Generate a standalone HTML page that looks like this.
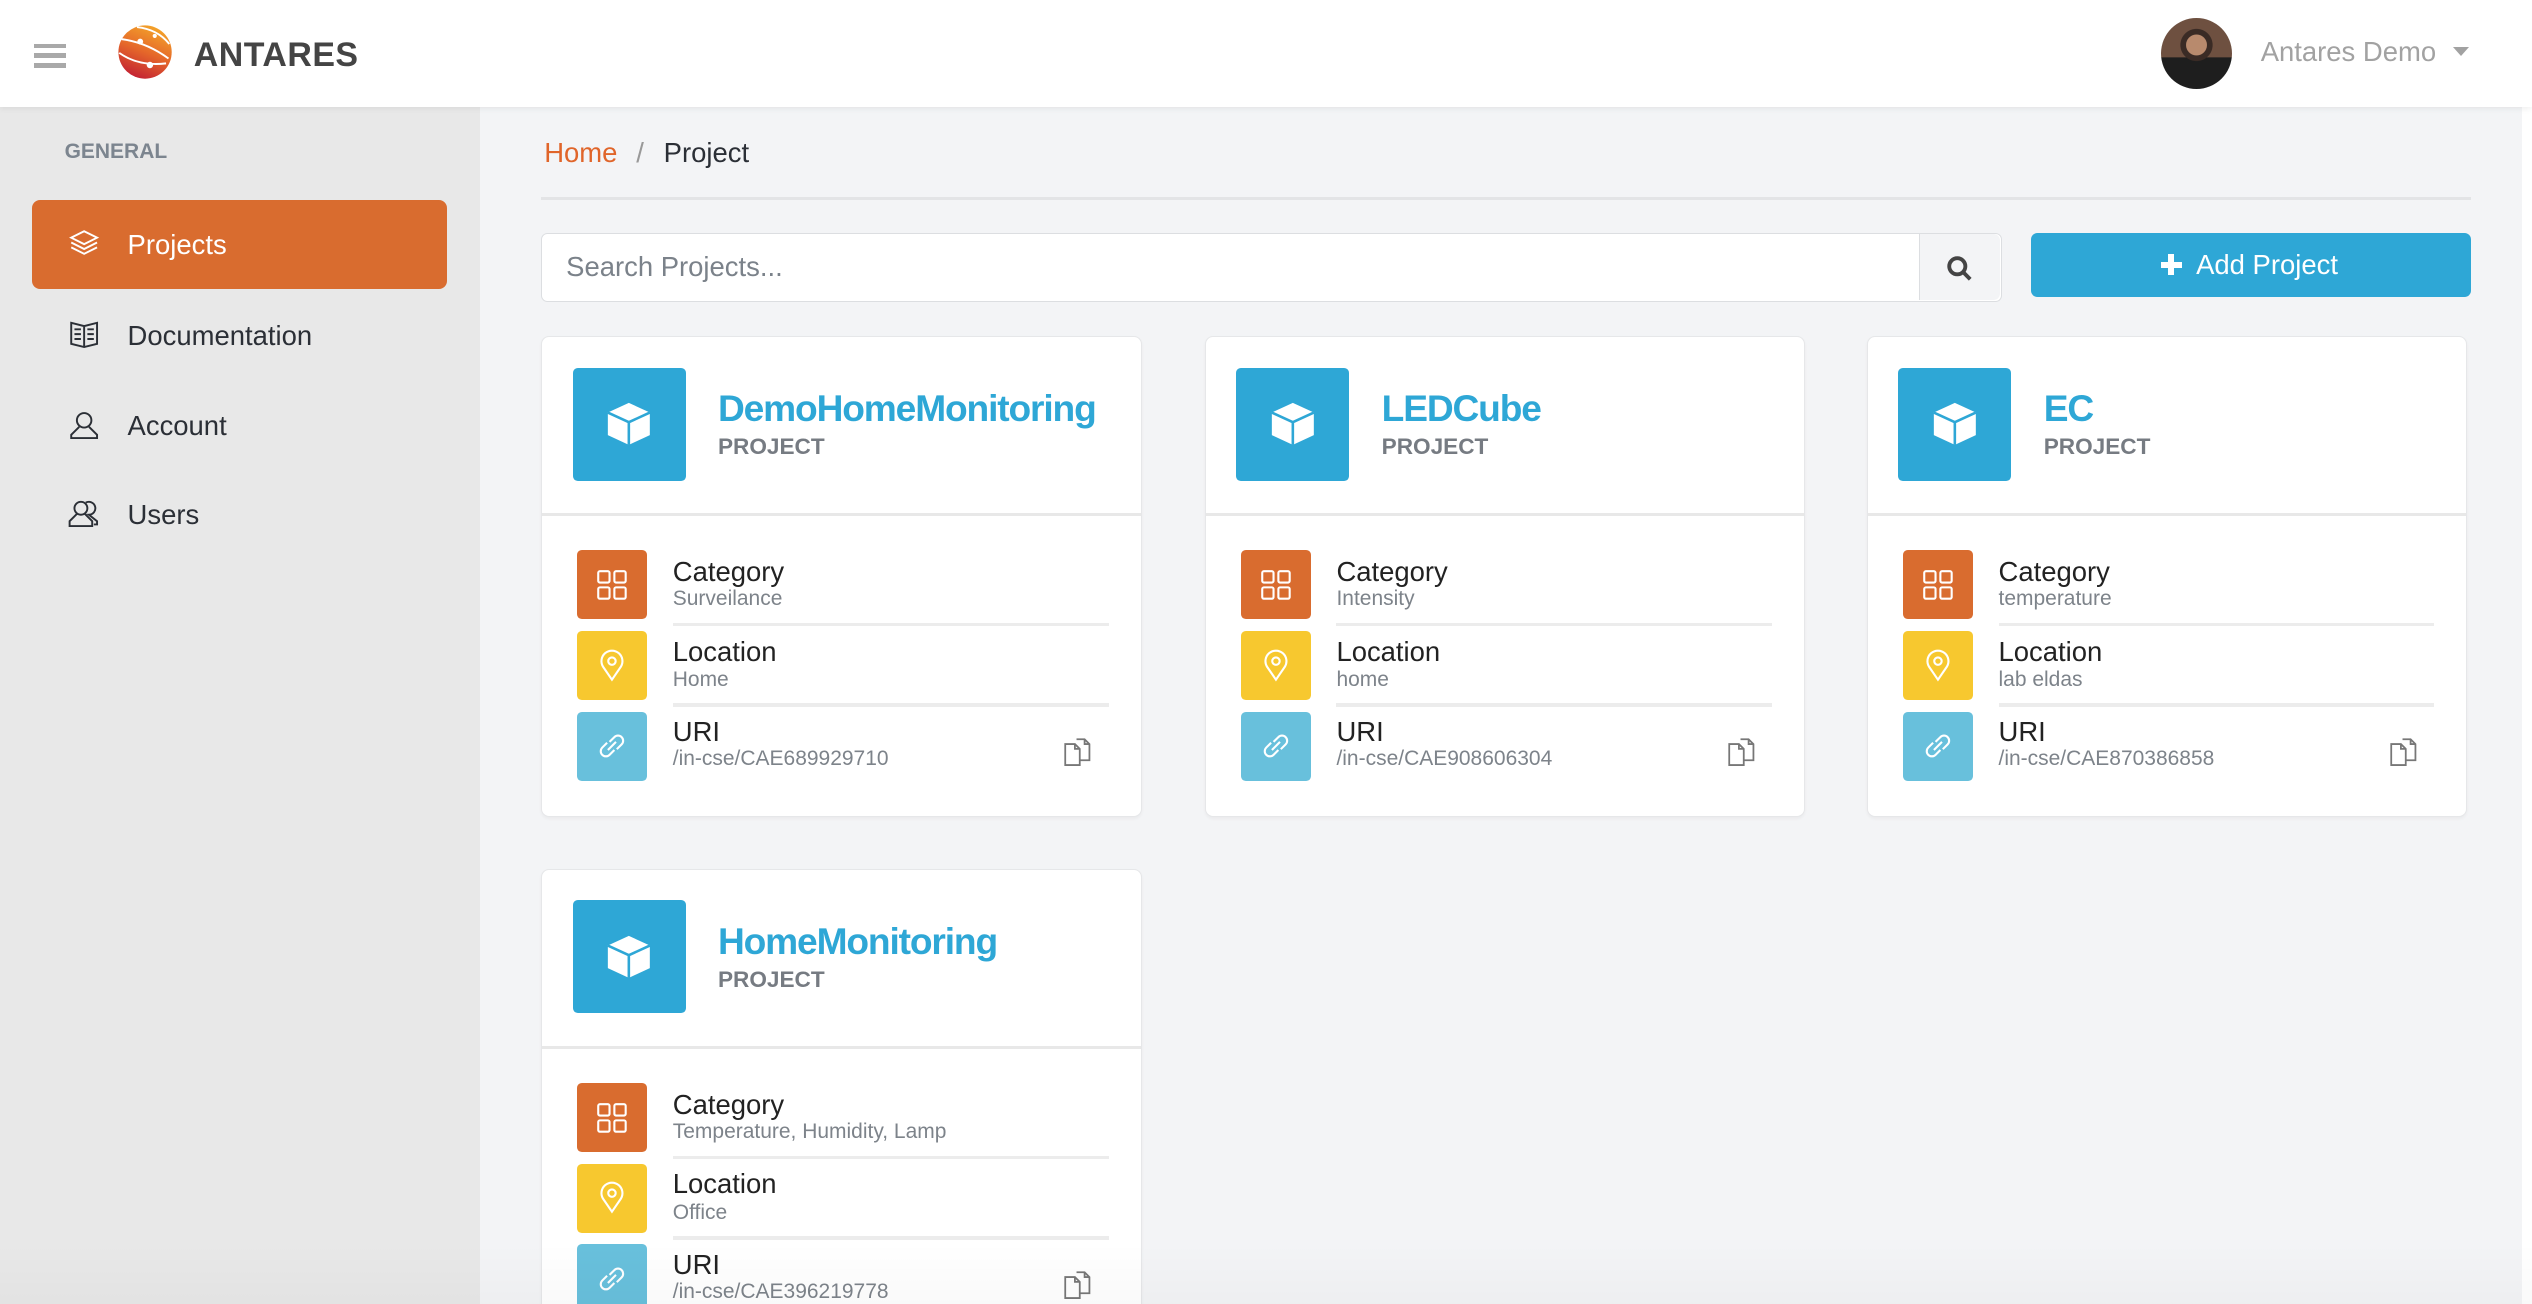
<!DOCTYPE html>
<html><head><meta charset="utf-8"><style>
*{box-sizing:border-box;margin:0;padding:0}
html,body{width:2532px;height:1304px;overflow:hidden;background:#f3f4f6}
#w{zoom:1.61480;width:1568px;height:808px;position:relative;font-family:"Liberation Sans",sans-serif;background:#f3f4f6;overflow:hidden}
.hdr{position:absolute;left:0;top:0;width:1568px;height:66px;background:#fff;box-shadow:0 1px 4px rgba(0,0,0,.08);z-index:2}
.side{position:absolute;left:0;top:66px;width:297px;height:742px;background:#e8e8e8}
.nav{position:absolute;left:20px;width:257px;height:55px;border-radius:5px;font-size:17px;color:#2b2f36}
.nav span{position:absolute;left:59px;top:18px}
.nav svg{position:absolute;left:22px;top:17px}
.card{position:absolute;width:372px;background:#fff;border:1px solid #e6e7e9;border-radius:5px;box-shadow:0 1px 2px rgba(0,0,0,.04)}
.cube{position:absolute;left:19px;top:19px;width:70px;height:70px;background:#2ea7d6;border-radius:3px}
.cube svg{position:absolute;left:19px;top:19px}
.ttl{position:absolute;left:109px;top:31px;font-weight:bold;font-size:23px;color:#2ea7d6;letter-spacing:-0.7px;white-space:nowrap}
.pj{position:absolute;left:109px;top:60px;font-weight:bold;font-size:14px;color:#767b82}
.dv{position:absolute;left:0;top:109px;width:100%;height:2px;background:#e8e8e8}
.ib{position:absolute;left:22px;width:43px;height:43px;border-radius:3px}
.ib svg{position:absolute;left:11px;top:11px}
.lb{position:absolute;left:81px;font-size:17px;color:#222}
.sb{position:absolute;left:81px;font-size:13px;color:#7d838a}
.sep{position:absolute;left:81px;width:270px;height:2px;background:#ececec}
.cp{position:absolute;left:322px}
</style></head><body><div id="w">
<div class="hdr">
 <div style="position:absolute;left:21px;top:27px;width:20px;height:3px;background:#a9a9a9"></div>
 <div style="position:absolute;left:21px;top:33px;width:20px;height:3px;background:#a9a9a9"></div>
 <div style="position:absolute;left:21px;top:39px;width:20px;height:3px;background:#a9a9a9"></div>
 <svg style="position:absolute;left:72px;top:14px" width="36" height="36" viewBox="0 0 36 36"><defs><linearGradient id="g" x1="0.7" y1="0" x2="0.3" y2="1"><stop offset="0" stop-color="#f4a62a"/><stop offset=".5" stop-color="#e5672a"/><stop offset="1" stop-color="#c21f33"/></linearGradient></defs><circle cx="18" cy="18" r="16.5" fill="url(#g)"/><path d="M13 2.5 Q26 4 33 13 M3.5 10 Q19 12 32.5 22 M2 18.5 Q14 27 31 25" stroke="#fff" stroke-width="1.2" fill="none"/><circle cx="15" cy="11.5" r="1.8" fill="#fff"/><circle cx="24" cy="8" r="1.3" fill="#fff"/><circle cx="21" cy="26" r="2" fill="#fff"/></svg>
 <div style="position:absolute;left:120px;top:22px;font-size:21px;font-weight:bold;color:#444;letter-spacing:.3px">ANTARES</div>
 <div style="position:absolute;left:1338px;top:11px;width:44px;height:44px;border-radius:50%;background:radial-gradient(circle at 50% 38%,#b88a6d 0 18%,#3a2b25 19% 28%,transparent 29%),linear-gradient(#6e5040 0 55%,#1e1e1e 56%);"></div>
 <div style="position:absolute;left:1400px;top:22px;font-size:17px;color:#a2a2a2">Antares Demo</div>
 <div style="position:absolute;left:1519px;top:29px;width:0;height:0;border-left:5px solid transparent;border-right:5px solid transparent;border-top:6px solid #a2a2a2"></div>
</div>
<div style="position:absolute;left:1562px;top:66px;width:6px;height:742px;background:#fff"></div>
<div class="side">
 <div style="position:absolute;left:40px;top:21px;font-size:13px;font-weight:bold;color:#7c858f">GENERAL</div>
 <div class="nav" style="top:58px;background:#d96c2f;color:#fff"><svg width="20" height="20" viewBox="0 0 20 20" fill="none" stroke="#fff" stroke-width="1.2"><path d="M10 2 L18 6 L10 10 L2 6Z"/><path d="M2 9 L10 13 L18 9"/><path d="M2 12 L10 16 L18 12"/></svg><span>Projects</span></div>
 <div class="nav" style="top:114px"><svg width="20" height="20" viewBox="0 0 20 20" fill="none" stroke="#2b2f36" stroke-width="1.2"><path d="M2 3 L10 5 L18 3 V16 L10 18 L2 16Z M10 5 V18"/><path d="M4 7 H8 M4 10 H8 M4 13 H8 M12 7 H16 M12 10 H16 M12 13 H16"/></svg><span>Documentation</span></div>
 <div class="nav" style="top:170px"><svg width="20" height="20" viewBox="0 0 20 20" fill="none" stroke="#2b2f36" stroke-width="1.2"><circle cx="10" cy="7" r="4.5"/><path d="M7 11 L2 16 V18 H18 V16 L13 11"/></svg><span>Account</span></div>
 <div class="nav" style="top:225px"><svg width="20" height="20" viewBox="0 0 20 20" fill="none" stroke="#2b2f36" stroke-width="1.2"><circle cx="8" cy="7" r="4"/><path d="M5.5 10.5 L1 15 V18 H15 V15 L10.5 10.5"/><path d="M11 3.5 A4 4 0 1 1 13 11 L18 15 V17 H16"/></svg><span>Users</span></div>
</div>
<div style="position:absolute;left:337px;top:85px;font-size:17px;color:#e0652a">Home</div>
<div style="position:absolute;left:394px;top:85px;font-size:17px;color:#999">/</div>
<div style="position:absolute;left:411px;top:85px;font-size:17px;color:#2b2f36">Project</div>
<div style="position:absolute;left:335px;top:122px;width:1195px;height:2px;background:#e3e4e6"></div>
<div style="position:absolute;left:335px;top:144px;width:905px;height:43px;background:#fff;border:1px solid #dcdee1;border-radius:4px">
 <div style="position:absolute;left:15px;top:11px;font-size:17px;color:#7b828a">Search Projects...</div>
 <div style="position:absolute;left:853px;top:0;width:50px;height:41px;background:#f3f4f6;border-left:1px solid #dcdee1;border-radius:0 4px 4px 0"><svg style="position:absolute;left:16px;top:13px" width="17" height="17" viewBox="0 0 17 17" fill="none" stroke="#444" stroke-width="2.4"><circle cx="7" cy="7" r="5"/><path d="M10.8 10.8 L15 15"/></svg></div>
</div>
<div style="position:absolute;left:1258px;top:144px;width:272px;height:40px;background:#2ea7d6;border-radius:4px;color:#fff;font-size:17px">
 <div style="position:absolute;left:80px;top:18px;width:13px;height:4px;background:#fff"></div>
 <div style="position:absolute;left:84.5px;top:13.5px;width:4px;height:13px;background:#fff"></div>
 <div style="position:absolute;left:102px;top:10px">Add Project</div>
</div>

<div class="card" style="left:335px;top:208px;height:298px">
 <div class="cube"><svg width="32" height="32" viewBox="0 0 32 32" fill="#fff" stroke="#2ea7d6" stroke-width="1.6" stroke-linejoin="round"><path d="M3 9 L16 3 L29 9 L29 23 L16 29 L3 23Z" stroke="none"/><path d="M3 9 L16 15 L29 9 M16 15 V29"/></svg></div>
 <div class="ttl">DemoHomeMonitoring</div><div class="pj">PROJECT</div><div class="dv"></div>
 <div class="ib" style="top:132px;background:#d96c2f"><svg width="21" height="21" viewBox="0 0 21 21" fill="none" stroke="#fff" stroke-width="1.3"><rect x="2" y="2" width="7" height="7" rx="1"/><rect x="12" y="2" width="7" height="7" rx="1"/><rect x="2" y="12" width="7" height="7" rx="1"/><rect x="12" y="12" width="7" height="7" rx="1"/></svg></div>
 <div class="lb" style="top:136px">Category</div><div class="sb" style="top:155px">Surveilance</div><div class="sep" style="top:177px"></div>
 <div class="ib" style="top:182px;background:#f7c82f"><svg width="21" height="21" viewBox="0 0 21 21" fill="none" stroke="#fff" stroke-width="1.3"><path d="M10.5 19 L5 11 A6.5 6.5 0 1 1 16 11Z"/><circle cx="10.5" cy="7.5" r="2.3"/></svg></div>
 <div class="lb" style="top:185px">Location</div><div class="sb" style="top:205px">Home</div><div class="sep" style="top:227px"></div>
 <div class="ib" style="top:232px;background:#68c0dc"><svg width="21" height="21" viewBox="0 0 21 21" fill="none" stroke="#fff" stroke-width="1.3"><path d="M9 8 L12 5 A3 3 0 0 1 16.5 9.5 L13.5 12.5"/><path d="M12 13 L9 16 A3 3 0 0 1 4.5 11.5 L7.5 8.5"/><path d="M8 13 L13 8"/></svg></div>
 <div class="lb" style="top:235px">URI</div><div class="sb" style="top:254px">/in-cse/CAE689929710</div>
 <svg class="cp" style="top:247px" width="20" height="20" viewBox="0 0 20 20" fill="none" stroke="#777" stroke-width="1.1"><path d="M2 5 H8 L11 8 V18 H2Z"/><path d="M8 5 V8 H11"/><path d="M9 2 H14 L17 5 V15 H11"/><path d="M14 2 V5 H17"/></svg>
</div>

<div class="card" style="left:746px;top:208px;height:298px">
 <div class="cube"><svg width="32" height="32" viewBox="0 0 32 32" fill="#fff" stroke="#2ea7d6" stroke-width="1.6" stroke-linejoin="round"><path d="M3 9 L16 3 L29 9 L29 23 L16 29 L3 23Z" stroke="none"/><path d="M3 9 L16 15 L29 9 M16 15 V29"/></svg></div>
 <div class="ttl">LEDCube</div><div class="pj">PROJECT</div><div class="dv"></div>
 <div class="ib" style="top:132px;background:#d96c2f"><svg width="21" height="21" viewBox="0 0 21 21" fill="none" stroke="#fff" stroke-width="1.3"><rect x="2" y="2" width="7" height="7" rx="1"/><rect x="12" y="2" width="7" height="7" rx="1"/><rect x="2" y="12" width="7" height="7" rx="1"/><rect x="12" y="12" width="7" height="7" rx="1"/></svg></div>
 <div class="lb" style="top:136px">Category</div><div class="sb" style="top:155px">Intensity</div><div class="sep" style="top:177px"></div>
 <div class="ib" style="top:182px;background:#f7c82f"><svg width="21" height="21" viewBox="0 0 21 21" fill="none" stroke="#fff" stroke-width="1.3"><path d="M10.5 19 L5 11 A6.5 6.5 0 1 1 16 11Z"/><circle cx="10.5" cy="7.5" r="2.3"/></svg></div>
 <div class="lb" style="top:185px">Location</div><div class="sb" style="top:205px">home</div><div class="sep" style="top:227px"></div>
 <div class="ib" style="top:232px;background:#68c0dc"><svg width="21" height="21" viewBox="0 0 21 21" fill="none" stroke="#fff" stroke-width="1.3"><path d="M9 8 L12 5 A3 3 0 0 1 16.5 9.5 L13.5 12.5"/><path d="M12 13 L9 16 A3 3 0 0 1 4.5 11.5 L7.5 8.5"/><path d="M8 13 L13 8"/></svg></div>
 <div class="lb" style="top:235px">URI</div><div class="sb" style="top:254px">/in-cse/CAE908606304</div>
 <svg class="cp" style="top:247px" width="20" height="20" viewBox="0 0 20 20" fill="none" stroke="#777" stroke-width="1.1"><path d="M2 5 H8 L11 8 V18 H2Z"/><path d="M8 5 V8 H11"/><path d="M9 2 H14 L17 5 V15 H11"/><path d="M14 2 V5 H17"/></svg>
</div>

<div class="card" style="left:1156px;top:208px;height:298px">
 <div class="cube"><svg width="32" height="32" viewBox="0 0 32 32" fill="#fff" stroke="#2ea7d6" stroke-width="1.6" stroke-linejoin="round"><path d="M3 9 L16 3 L29 9 L29 23 L16 29 L3 23Z" stroke="none"/><path d="M3 9 L16 15 L29 9 M16 15 V29"/></svg></div>
 <div class="ttl">EC</div><div class="pj">PROJECT</div><div class="dv"></div>
 <div class="ib" style="top:132px;background:#d96c2f"><svg width="21" height="21" viewBox="0 0 21 21" fill="none" stroke="#fff" stroke-width="1.3"><rect x="2" y="2" width="7" height="7" rx="1"/><rect x="12" y="2" width="7" height="7" rx="1"/><rect x="2" y="12" width="7" height="7" rx="1"/><rect x="12" y="12" width="7" height="7" rx="1"/></svg></div>
 <div class="lb" style="top:136px">Category</div><div class="sb" style="top:155px">temperature</div><div class="sep" style="top:177px"></div>
 <div class="ib" style="top:182px;background:#f7c82f"><svg width="21" height="21" viewBox="0 0 21 21" fill="none" stroke="#fff" stroke-width="1.3"><path d="M10.5 19 L5 11 A6.5 6.5 0 1 1 16 11Z"/><circle cx="10.5" cy="7.5" r="2.3"/></svg></div>
 <div class="lb" style="top:185px">Location</div><div class="sb" style="top:205px">lab eldas</div><div class="sep" style="top:227px"></div>
 <div class="ib" style="top:232px;background:#68c0dc"><svg width="21" height="21" viewBox="0 0 21 21" fill="none" stroke="#fff" stroke-width="1.3"><path d="M9 8 L12 5 A3 3 0 0 1 16.5 9.5 L13.5 12.5"/><path d="M12 13 L9 16 A3 3 0 0 1 4.5 11.5 L7.5 8.5"/><path d="M8 13 L13 8"/></svg></div>
 <div class="lb" style="top:235px">URI</div><div class="sb" style="top:254px">/in-cse/CAE870386858</div>
 <svg class="cp" style="top:247px" width="20" height="20" viewBox="0 0 20 20" fill="none" stroke="#777" stroke-width="1.1"><path d="M2 5 H8 L11 8 V18 H2Z"/><path d="M8 5 V8 H11"/><path d="M9 2 H14 L17 5 V15 H11"/><path d="M14 2 V5 H17"/></svg>
</div>

<div class="card" style="left:335px;top:538px;height:298px">
 <div class="cube"><svg width="32" height="32" viewBox="0 0 32 32" fill="#fff" stroke="#2ea7d6" stroke-width="1.6" stroke-linejoin="round"><path d="M3 9 L16 3 L29 9 L29 23 L16 29 L3 23Z" stroke="none"/><path d="M3 9 L16 15 L29 9 M16 15 V29"/></svg></div>
 <div class="ttl">HomeMonitoring</div><div class="pj">PROJECT</div><div class="dv"></div>
 <div class="ib" style="top:132px;background:#d96c2f"><svg width="21" height="21" viewBox="0 0 21 21" fill="none" stroke="#fff" stroke-width="1.3"><rect x="2" y="2" width="7" height="7" rx="1"/><rect x="12" y="2" width="7" height="7" rx="1"/><rect x="2" y="12" width="7" height="7" rx="1"/><rect x="12" y="12" width="7" height="7" rx="1"/></svg></div>
 <div class="lb" style="top:136px">Category</div><div class="sb" style="top:155px">Temperature, Humidity, Lamp</div><div class="sep" style="top:177px"></div>
 <div class="ib" style="top:182px;background:#f7c82f"><svg width="21" height="21" viewBox="0 0 21 21" fill="none" stroke="#fff" stroke-width="1.3"><path d="M10.5 19 L5 11 A6.5 6.5 0 1 1 16 11Z"/><circle cx="10.5" cy="7.5" r="2.3"/></svg></div>
 <div class="lb" style="top:185px">Location</div><div class="sb" style="top:205px">Office</div><div class="sep" style="top:227px"></div>
 <div class="ib" style="top:232px;background:#68c0dc"><svg width="21" height="21" viewBox="0 0 21 21" fill="none" stroke="#fff" stroke-width="1.3"><path d="M9 8 L12 5 A3 3 0 0 1 16.5 9.5 L13.5 12.5"/><path d="M12 13 L9 16 A3 3 0 0 1 4.5 11.5 L7.5 8.5"/><path d="M8 13 L13 8"/></svg></div>
 <div class="lb" style="top:235px">URI</div><div class="sb" style="top:254px">/in-cse/CAE396219778</div>
 <svg class="cp" style="top:247px" width="20" height="20" viewBox="0 0 20 20" fill="none" stroke="#777" stroke-width="1.1"><path d="M2 5 H8 L11 8 V18 H2Z"/><path d="M8 5 V8 H11"/><path d="M9 2 H14 L17 5 V15 H11"/><path d="M14 2 V5 H17"/></svg>
</div>
<div style="position:absolute;left:0;top:770px;width:1568px;height:38px;background:linear-gradient(rgba(0,0,0,0),rgba(0,0,0,.025));pointer-events:none"></div>
</div></body></html>
